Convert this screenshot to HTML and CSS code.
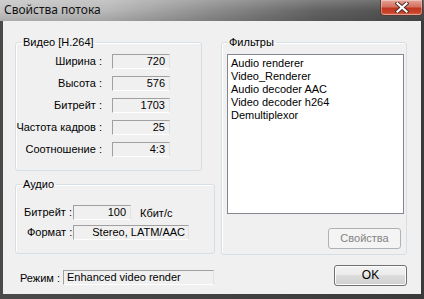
FILE: index.html
```html
<!DOCTYPE html>
<html>
<head>
<meta charset="utf-8">
<link rel="stylesheet" href="styles.css">
</head>
<body>
<div class="window">
  <div class="titlebar">
    <span class="title">Свойства потока</span>
    <div class="close">
      <svg width="14" height="11" viewBox="0 0 14 11">
        <path d="M2.5 1.5 L11.5 9.5 M11.5 1.5 L2.5 9.5" stroke="#4a2a26" stroke-width="4" stroke-linecap="square"/>
        <path d="M2.5 1.5 L11.5 9.5 M11.5 1.5 L2.5 9.5" stroke="#ffffff" stroke-width="2.2" stroke-linecap="square"/>
      </svg>
    </div>
  </div>
  <div class="frame">
    <div class="client">
      <div class="col-left">
        <fieldset class="group video">
          <legend>Видео [H.264]</legend>
          <div class="vrows">
            <span class="lbl">Ширина :</span><span class="val">720</span>
            <span class="lbl">Высота :</span><span class="val">576</span>
            <span class="lbl">Битрейт :</span><span class="val">1703</span>
            <span class="lbl">Частота кадров :</span><span class="val">25</span>
            <span class="lbl">Соотношение :</span><span class="val">4:3</span>
          </div>
        </fieldset>
        <fieldset class="group audio">
          <legend>Аудио</legend>
          <div class="arow">
            <span class="albl">Битрейт :</span><span class="val">100</span><span class="unit">Кбит/с</span>
          </div>
          <div class="arow">
            <span class="albl fmt">Формат :</span><span class="val wide">Stereo, LATM/AAC</span>
          </div>
        </fieldset>
        <div class="mode">
          <span class="mlbl">Режим :</span><span class="val left">Enhanced video render</span>
        </div>
      </div>
      <div class="col-right">
        <fieldset class="group filters">
          <legend>Фильтры</legend>
          <div class="listbox">
            <div>Audio renderer</div>
            <div>Video_Renderer</div>
            <div>Audio decoder AAC</div>
            <div>Video decoder h264</div>
            <div>Demultiplexor</div>
          </div>
          <div class="btnrow"><span class="btn disabled">Свойства</span></div>
        </fieldset>
        <div class="btnrow ok-row"><span class="btn ok">OK</span></div>
      </div>
    </div>
  </div>
</div>
</body>
</html>
```

FILE: styles.css
```css
html, body {
  margin: 0;
  padding: 0;
  background: #2a2a2a;
}
.window {
  width: 424px;
  height: 299px;
  display: flex;
  flex-direction: column;
  background: linear-gradient(to right, #4a4a4a, #3a3a3a);
  font-family: "Liberation Sans", Arial, sans-serif;
  font-size: 11px;
  color: #000;
}
.titlebar {
  height: 21px;
  flex: none;
  display: flex;
  align-items: flex-start;
  background:
    linear-gradient(to bottom, rgba(255,255,255,0.18), rgba(255,255,255,0) 50%, rgba(0,0,0,0.12)),
    linear-gradient(to right, #c4c4c4 0%, #b9b9b9 25%, #8d8d8d 50%, #626262 75%, #4b4b4b 100%);
}
.title {
  font-family: "Noto Sans", "Open Sans", sans-serif;
  font-size: 12px;
  line-height: 16px;
  padding: 2px 0 0 4px;
  color: #111;
}
.close {
  margin-left: auto;
  margin-right: 1px;
  width: 41px;
  height: 15px;
  border: 1px solid #5a3a36;
  border-top: none;
  border-radius: 0 0 4px 4px;
  background: linear-gradient(to bottom, #e4a396 0%, #d47160 45%, #c0361f 55%, #c9452c 85%, #d87a5e 100%);
  box-shadow: inset 0 0 0 1px rgba(255,255,255,0.35);
  display: flex;
  align-items: center;
  justify-content: center;
}
.frame {
  flex: 1;
  padding: 0 3px 5px 3px;
  display: flex;
}
.client {
  flex: 1;
  background: #f0f0f0;
  display: flex;
  padding: 15px 0 0 12px;
  gap: 7px;
}
.col-left {
  width: 199px;
  display: flex;
  flex-direction: column;
}
.col-right {
  width: 186px;
  display: flex;
  flex-direction: column;
}
.group {
  margin: 0;
  border: 1px solid #d5dfe5;
  border-radius: 3px;
  box-shadow: inset 1px 1px 0 #fff;
  padding: 0;
  min-width: 0;
}
.group legend {
  padding: 0 2px 0 1px;
  margin-left: 6px;
  line-height: 13px;
}
.video {
  width: 187px;
  height: 135px;
  box-sizing: border-box;
  flex: none;
}
.vrows {
  display: grid;
  grid-template-columns: 86px 58px;
  column-gap: 10px;
  row-gap: 7px;
  padding-top: 5px;
}
.lbl {
  text-align: right;
  line-height: 15px;
  white-space: nowrap;
}
.val {
  height: 15px;
  box-sizing: border-box;
  border-top: 1px solid #a0a0a0;
  border-left: 1px solid #a0a0a0;
  border-right: 1px solid #e3e3e3;
  border-bottom: 1px solid #ffffff;
  text-align: right;
  padding-right: 4px;
  line-height: 13px;
  white-space: nowrap;
  width: 58px;
}
.val.wide {
  width: 116px;
  padding-right: 3px;
}
.val.left {
  text-align: left;
  padding-left: 3px;
  width: 151px;
}
.audio {
  width: 198px;
  flex: none;
  margin-top: 7px;
  padding-bottom: 13px;
}
.arow {
  display: flex;
  align-items: center;
  margin-top: 14px;
}
.arow + .arow {
  margin-top: 5px;
}
.albl {
  width: 57px;
  box-sizing: border-box;
  padding-left: 8px;
  line-height: 15px;
}
.albl.fmt {
  padding-left: 11px;
}
.unit {
  margin-left: 9px;
}
.mode {
  display: flex;
  align-items: center;
  margin-top: 16px;
}
.mlbl {
  width: 48px;
  box-sizing: border-box;
  padding-left: 5px;
}
.filters {
  width: 186px;
  height: 219px;
  box-sizing: border-box;
  display: flex;
  flex-direction: column;
  flex: none;
}
.listbox {
  margin: 5px 0 0 5px;
  width: 177px;
  height: 160px;
  box-sizing: border-box;
  border: 1px solid #828790;
  background: #fff;
  padding: 2px 0 0 3px;
  line-height: 13px;
}
.btnrow {
  display: flex;
  justify-content: flex-end;
}
.filters .btnrow {
  margin-top: 14px;
  padding-right: 5px;
}
.btn {
  width: 73px;
  height: 21px;
  box-sizing: border-box;
  border-radius: 3px;
  text-align: center;
  line-height: 19px;
}
.btn.disabled {
  border: 1px solid #adb2b5;
  background: #f4f4f4;
  color: #838383;
}
.ok-row {
  margin-top: 10px;
}
.btn.ok {
  border: 1px solid #707070;
  background: linear-gradient(to bottom, #f2f2f2 0%, #ebebeb 50%, #dddddd 50%, #cfcfcf 100%);
  box-shadow: inset 0 0 0 1px #fcfcfc;
  font-size: 12px;
}
```
